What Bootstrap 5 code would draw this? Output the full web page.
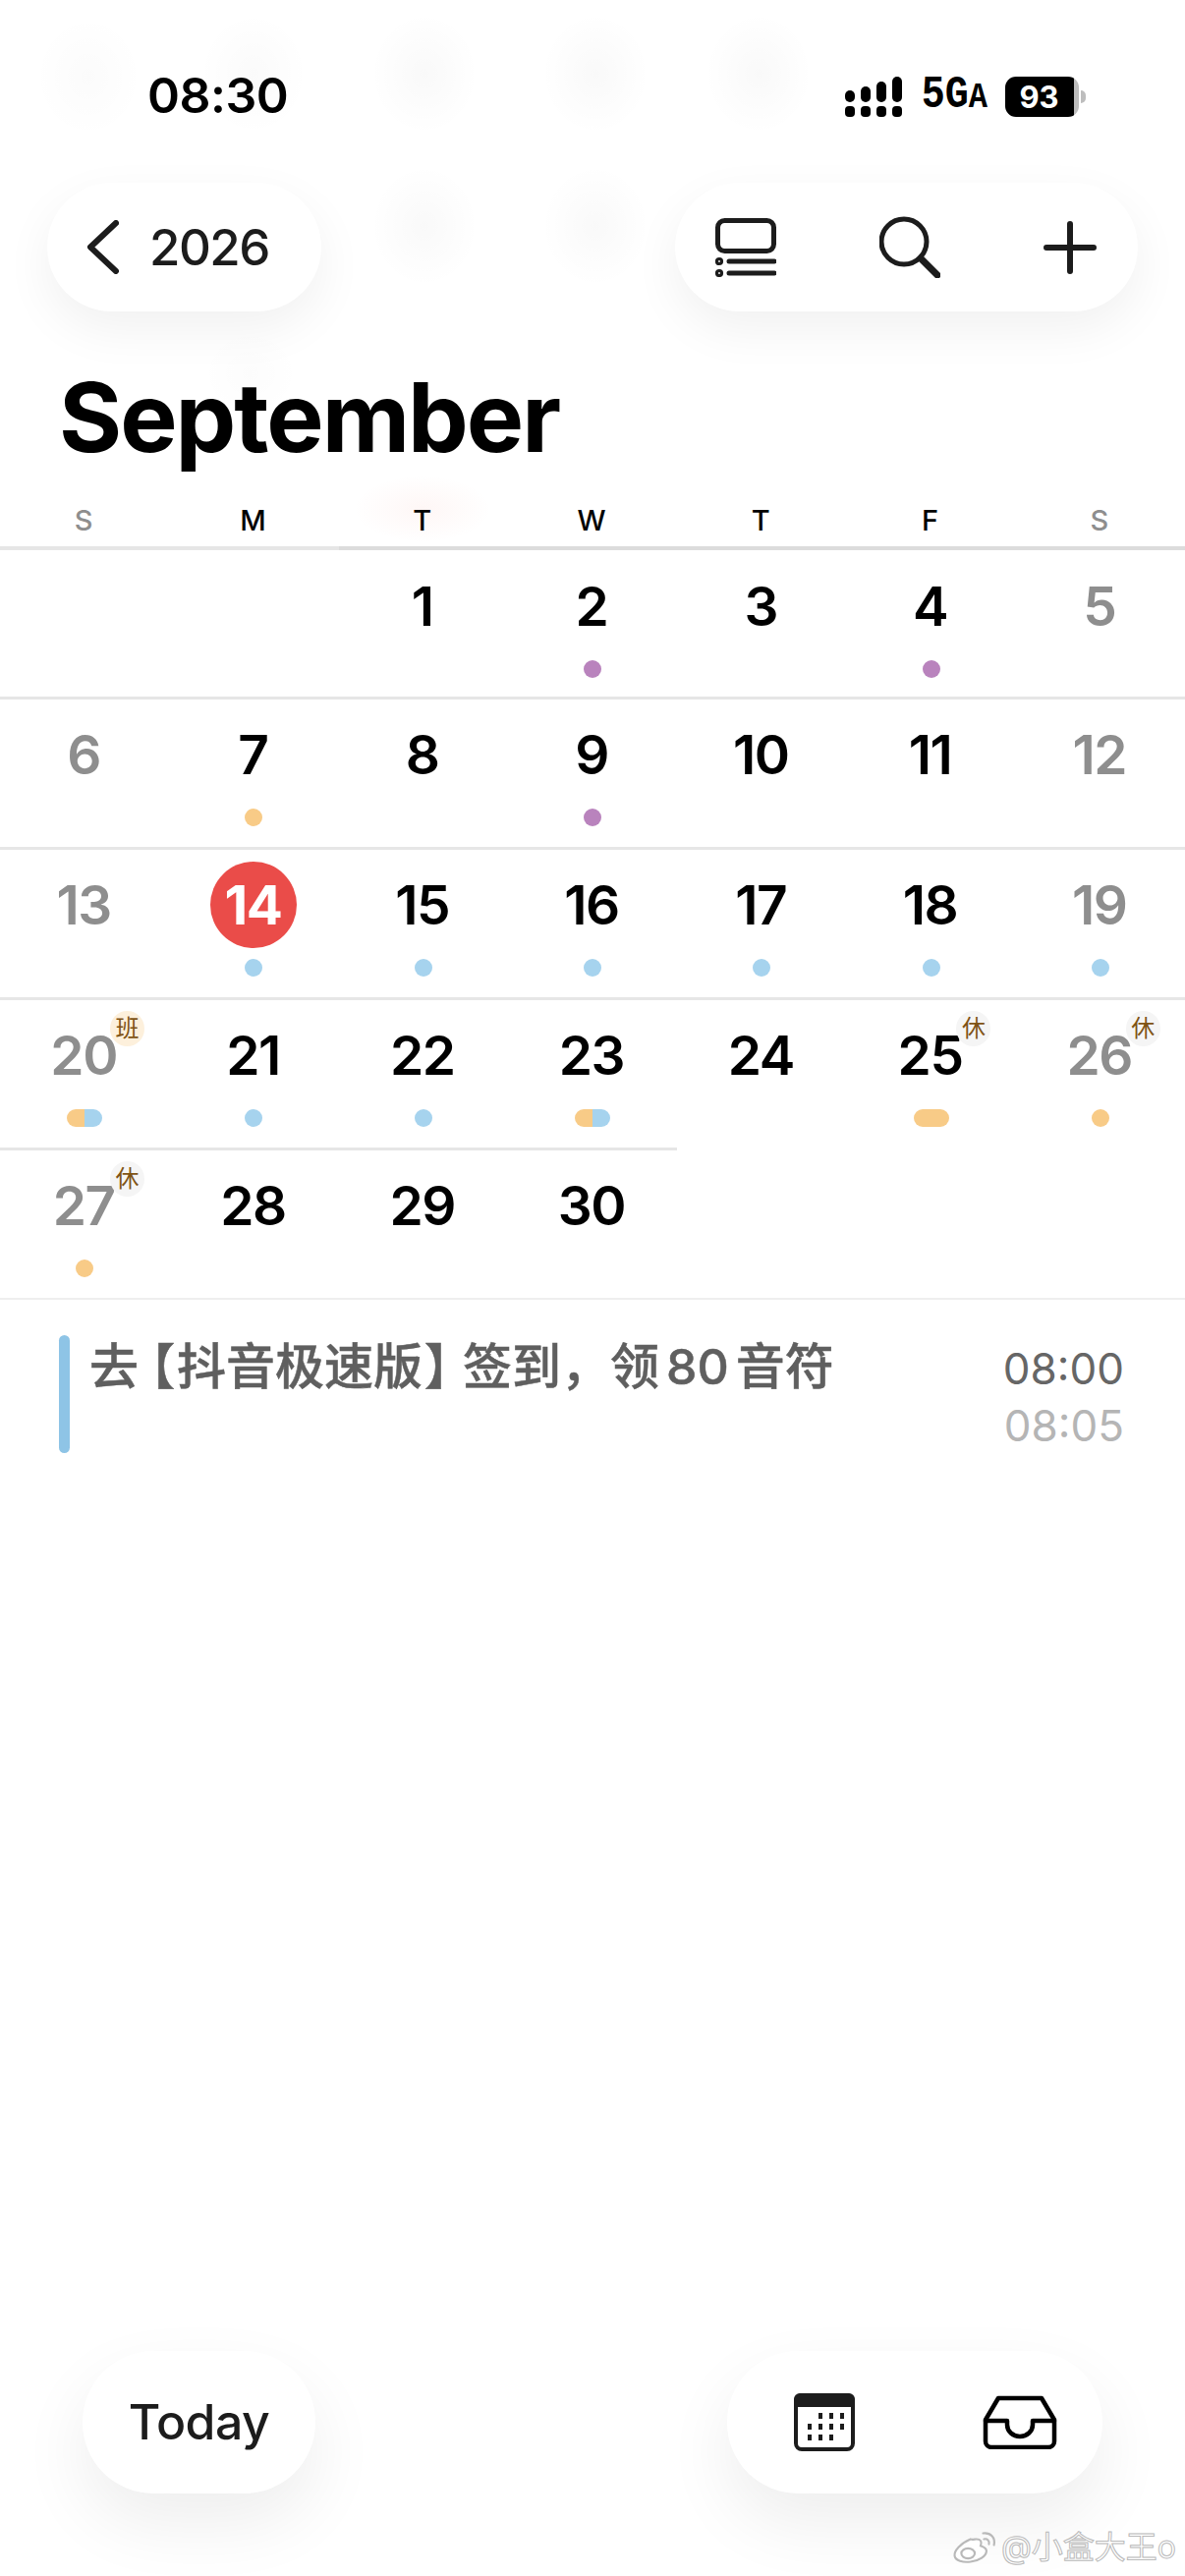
<!DOCTYPE html>
<html lang="en">
<head>
<meta charset="UTF-8">
<meta name="viewport" content="width=device-width, initial-scale=1.0">
<title>September 2026</title>
<link href="https://cdn.jsdelivr.net/npm/bootstrap@5.3.3/dist/css/bootstrap.min.css" rel="stylesheet">
<style>
body {
    margin: 0;
    font-family: "Inter", "Noto Sans CJK SC", sans-serif;
    color: #000;
    background-color: #fff;
    background-repeat: no-repeat;
    background-image:
        radial-gradient(ellipse 55px 62px at 90px 78px, rgba(0,0,0,.014), transparent),
        radial-gradient(ellipse 55px 62px at 258px 75px, rgba(0,0,0,.02), transparent),
        radial-gradient(ellipse 55px 62px at 432px 75px, rgba(0,0,0,.024), transparent),
        radial-gradient(ellipse 55px 62px at 606px 75px, rgba(0,0,0,.024), transparent),
        radial-gradient(ellipse 55px 62px at 772px 75px, rgba(0,0,0,.024), transparent),
        radial-gradient(ellipse 55px 62px at 432px 230px, rgba(0,0,0,.024), transparent),
        radial-gradient(ellipse 55px 62px at 606px 230px, rgba(0,0,0,.024), transparent),
        radial-gradient(ellipse 50px 45px at 255px 380px, rgba(0,0,0,.01), transparent),
        radial-gradient(ellipse 70px 34px at 430px 518px, rgba(240,90,70,.05), transparent);
}
.phone { height: 2622px; }
.status-row { padding: 77px 101px 0 150px; height: 186px; }
.clock { font-size: 50px; font-weight: 600; line-height: 41px; letter-spacing: -.5px; }
.net-type { font-family: "Liberation Mono", monospace; font-weight: 700; font-size: 40px; line-height: 41px; margin: 0 18px 0 20px; transform: scaleY(1.15); }
.net-type span { font-size: 32px; }
.batt-body { width: 75px; height: 41px; border-radius: 11px; color: #fff; font-size: 31px; font-weight: 700; line-height: 41px; padding-right: 6px; background: linear-gradient(to right, #000 93%, #bdbdbd 93%); }
.batt-nub { width: 5px; height: 13px; margin-left: 2px; background: #bdbdbd; border-radius: 0 5px 5px 0; }
.float-pill { background: #fff; border-radius: 66px; box-shadow: 0 18px 50px rgba(0,0,0,.06); }
.top-row { padding: 0 48px; }
.pill-year { width: 279px; height: 131px; padding-left: 40px; gap: 31px; font-size: 51px; font-weight: 500; color: #1c1c1c; line-height: 1; letter-spacing: -1.5px; }
.pill-tools { width: 471px; height: 131px; padding-left: 41px; gap: 105px; }
.month-title { font-size: 98px; font-weight: 700; letter-spacing: -2px; line-height: 110px; margin: 0; padding: 53px 0 0 60px; height: 189px; }
.week-head { height: 50px; }
.week-head .col { font-size: 29px; font-weight: 500; line-height: 48px; text-align: center; padding-right: 2px; }
.week-head .col.wk-end { color: #8e8e8e; }
.cal-cell { height: 153px; border-top: 3px solid #e6e6e6; position: relative; text-align: center; padding-top: 12px; }
.cal-cell.head-line { border-top-width: 4px; padding-top: 13px; }
.cal-cell.head-strong { border-top-color: #dcdcdc; }
.cal-cell.no-line { border-top-color: transparent; }
.day-num { display: block; width: 88px; height: 88px; margin: 0 auto; font-size: 55px; font-weight: 600; line-height: 88px; letter-spacing: -1.5px; text-indent: -2px; }
.day-off .day-num { color: #8e8e8e; }
.day-today { background: #ea4c49; color: #fff; font-weight: 700; border-radius: 50%; }
.ev-dot { display: block; height: 18px; width: 18px; border-radius: 9px; margin: 11px auto 0; }
.ev-purple { background: #b983bd; }
.ev-orange { background: #f8cb87; }
.ev-blue { background: #a6d3ee; }
.ev-wide { width: 36px; }
.ev-both { width: 36px; background: linear-gradient(to right, #f8cb87 50%, #a6d3ee 50%); }
.tag-day { position: absolute; top: 11px; left: 112px; width: 35px; height: 36px; border-radius: 50%; font-size: 24px; line-height: 36px; color: #7f5314; background: #f5f5f5; }
.tag-work { background: #fdf0dc; }
.event-row { border-top: 2px solid #eee; padding: 36px 62px 0 60px; gap: 20px; }
.event-bar { width: 11px; height: 120px; border-radius: 6px; background: #8ec4e6; }
.event-title { font-size: 50px; font-weight: 500; color: #5f5f5f; line-height: 58px; padding-top: 3px; -webkit-text-stroke: .5px #5f5f5f; }
.brk-open { font-feature-settings: "palt"; padding: 0 3px 0 11px; }
.brk-close { font-feature-settings: "palt"; padding: 0 13px 0 3px; }
.num-gap { margin: 0 7px; }
.event-times { font-size: 44px; line-height: 58px; text-align: right; color: #666; padding-top: 5px; }
.event-times div + div { color: #b5b5b5; }
.bottom-row { margin-top: auto; padding: 0 84px 84px; position: relative; }
.bottom-row .float-pill { box-shadow: 0 30px 70px rgba(0,0,0,.07); }
.pill-today { width: 237px; height: 145px; font-size: 50px; font-weight: 500; letter-spacing: -.5px; color: #1c1c1c; border-radius: 72px; }
.pill-views { width: 382px; height: 145px; padding-left: 68px; gap: 130px; border-radius: 72px; }
.mark-line { position: absolute; right: 9px; bottom: 10px; font-size: 32px; line-height: 38px; color: #fff; -webkit-text-stroke: 1px #b9b9b9; gap: 4px; }
svg { display: block; flex: none; }
</style>
</head>
<body>
<div class="phone d-flex flex-column">
    <div class="status-row d-flex justify-content-between align-items-start">
        <div class="clock">08:30</div>
        <div class="d-flex align-items-center">
            <svg width="58" height="41" viewBox="0 0 58 41" fill="#000">
                <rect x="0" y="14" width="10" height="12" rx="5"/><rect x="16" y="10" width="10" height="16" rx="5"/><rect x="32" y="5" width="10" height="21" rx="5"/><rect x="48" y="0" width="10" height="26" rx="5"/>
                <rect x="0" y="30" width="10" height="11" rx="4"/><rect x="16" y="30" width="10" height="11" rx="4"/><rect x="32" y="30" width="10" height="11" rx="4"/><rect x="48" y="30" width="10" height="11" rx="4"/>
            </svg>
            <div class="net-type">5G<span>A</span></div>
            <div class="batt-body text-center">93</div>
            <div class="batt-nub"></div>
        </div>
    </div>

    <div class="top-row d-flex justify-content-between">
        <div class="float-pill pill-year d-flex align-items-center">
            <svg width="33" height="55" viewBox="0 0 33 55" fill="none" stroke="#1c1c1c" stroke-width="6" stroke-linecap="round" stroke-linejoin="round"><path d="M30 3 4 27.5 30 52"/></svg>
            <span>2026</span>
        </div>
        <div class="float-pill pill-tools d-flex align-items-center">
            <svg width="62" height="60" viewBox="0 0 62 60" fill="none" stroke="#1c1c1c" stroke-width="5" stroke-linecap="round">
                <rect x="2.5" y="2.5" width="57" height="31" rx="7"/>
                <path d="M14 44H60M14 56H60"/>
                <circle cx="4" cy="44" r="1.6"/><circle cx="4" cy="56" r="1.6"/>
            </svg>
            <svg width="62" height="63" viewBox="0 0 62 63" fill="none" stroke="#1c1c1c" stroke-linecap="round">
                <circle cx="25" cy="26" r="23" stroke-width="5"/>
                <path d="M42 43 59 60" stroke-width="7"/>
            </svg>
            <svg width="54" height="54" viewBox="0 0 54 54" fill="none" stroke="#1c1c1c" stroke-width="6" stroke-linecap="round"><path d="M27 3V51M3 27H51"/></svg>
        </div>
    </div>

    <h1 class="month-title">September</h1>

    <div class="row g-0 week-head">
        <div class="col wk-end">S</div><div class="col">M</div><div class="col">T</div><div class="col">W</div><div class="col">T</div><div class="col">F</div><div class="col wk-end">S</div>
    </div>

    <div class="row g-0">
        <div class="col cal-cell head-line"></div>
        <div class="col cal-cell head-line"></div>
        <div class="col cal-cell head-line head-strong"><span class="day-num">1</span></div>
        <div class="col cal-cell head-line head-strong"><span class="day-num">2</span><span class="ev-dot ev-purple"></span></div>
        <div class="col cal-cell head-line head-strong"><span class="day-num">3</span></div>
        <div class="col cal-cell head-line head-strong"><span class="day-num">4</span><span class="ev-dot ev-purple"></span></div>
        <div class="col cal-cell head-line head-strong day-off"><span class="day-num">5</span></div>
    </div>
    <div class="row g-0">
        <div class="col cal-cell day-off"><span class="day-num">6</span></div>
        <div class="col cal-cell"><span class="day-num">7</span><span class="ev-dot ev-orange"></span></div>
        <div class="col cal-cell"><span class="day-num">8</span></div>
        <div class="col cal-cell"><span class="day-num">9</span><span class="ev-dot ev-purple"></span></div>
        <div class="col cal-cell"><span class="day-num">10</span></div>
        <div class="col cal-cell"><span class="day-num">11</span></div>
        <div class="col cal-cell day-off"><span class="day-num">12</span></div>
    </div>
    <div class="row g-0">
        <div class="col cal-cell day-off"><span class="day-num">13</span></div>
        <div class="col cal-cell"><span class="day-num day-today">14</span><span class="ev-dot ev-blue"></span></div>
        <div class="col cal-cell"><span class="day-num">15</span><span class="ev-dot ev-blue"></span></div>
        <div class="col cal-cell"><span class="day-num">16</span><span class="ev-dot ev-blue"></span></div>
        <div class="col cal-cell"><span class="day-num">17</span><span class="ev-dot ev-blue"></span></div>
        <div class="col cal-cell"><span class="day-num">18</span><span class="ev-dot ev-blue"></span></div>
        <div class="col cal-cell day-off"><span class="day-num">19</span><span class="ev-dot ev-blue"></span></div>
    </div>
    <div class="row g-0">
        <div class="col cal-cell day-off"><span class="day-num">20</span><span class="ev-dot ev-both"></span><span class="tag-day tag-work">班</span></div>
        <div class="col cal-cell"><span class="day-num">21</span><span class="ev-dot ev-blue"></span></div>
        <div class="col cal-cell"><span class="day-num">22</span><span class="ev-dot ev-blue"></span></div>
        <div class="col cal-cell"><span class="day-num">23</span><span class="ev-dot ev-both"></span></div>
        <div class="col cal-cell"><span class="day-num">24</span></div>
        <div class="col cal-cell"><span class="day-num">25</span><span class="ev-dot ev-orange ev-wide"></span><span class="tag-day">休</span></div>
        <div class="col cal-cell day-off"><span class="day-num">26</span><span class="ev-dot ev-orange"></span><span class="tag-day">休</span></div>
    </div>
    <div class="row g-0">
        <div class="col cal-cell day-off"><span class="day-num">27</span><span class="ev-dot ev-orange"></span><span class="tag-day">休</span></div>
        <div class="col cal-cell"><span class="day-num">28</span></div>
        <div class="col cal-cell"><span class="day-num">29</span></div>
        <div class="col cal-cell"><span class="day-num">30</span></div>
        <div class="col cal-cell no-line"></div>
        <div class="col cal-cell no-line"></div>
        <div class="col cal-cell no-line"></div>
    </div>

    <div class="event-row d-flex align-items-start">
        <div class="event-bar"></div>
        <div class="event-title flex-grow-1">去<span class="brk-open">【</span>抖音极速版<span class="brk-close">】</span>签到，领<span class="num-gap">80</span>音符</div>
        <div class="event-times">
            <div>08:00</div>
            <div>08:05</div>
        </div>
    </div>

    <div class="bottom-row d-flex justify-content-between">
        <div class="float-pill pill-today d-flex align-items-center justify-content-center">Today</div>
        <div class="float-pill pill-views d-flex align-items-center">
            <svg width="62" height="59" viewBox="0 0 62 59" fill="none">
                <rect x="2" y="2" width="58" height="55" rx="6" stroke="#1c1c1c" stroke-width="4"/>
                <path d="M6 0H56a6 6 0 0 1 6 6V14H0V6a6 6 0 0 1 6-6Z" fill="#1c1c1c"/>
                <g fill="#1c1c1c">
                    <rect x="25" y="20" width="4" height="6"/><rect x="36" y="20" width="4" height="6"/><rect x="47" y="20" width="4" height="6"/>
                    <rect x="14" y="31" width="4" height="6"/><rect x="25" y="31" width="4" height="6"/><rect x="36" y="31" width="4" height="6"/><rect x="47" y="31" width="4" height="6"/>
                    <rect x="14" y="42" width="4" height="6"/><rect x="25" y="42" width="4" height="6"/><rect x="36" y="42" width="4" height="6"/>
                </g>
            </svg>
            <svg width="76" height="55" viewBox="0 0 76 55" fill="none" stroke="#000" stroke-width="4.5" stroke-linejoin="round" stroke-linecap="round">
                <path d="M3 25 16 3H60L73 25V47a6 6 0 0 1-6 6H9a6 6 0 0 1-6-6Z"/>
                <path d="M3 26H25V30a13 12 0 0 0 26 0V26H73"/>
            </svg>
        </div>
        <div class="mark-line d-flex align-items-center">
            <svg width="46" height="38" viewBox="0 0 54 38" fill="#fff" stroke="#b9b9b9" stroke-width="2.5" stroke-linecap="round">
                <path d="M22 9C10 14 2 23 3 29c1 6 10 8 19 7 10-1 19-7 19-13 0-4-5-5-7-6 2-5 0-8-5-8-2 0-5 1-7 0Z"/>
                <ellipse cx="19" cy="26" rx="8" ry="6"/>
                <path d="M38 9c4-1 7 2 6 6M37 2c9-1 15 5 13 14" fill="none"/>
            </svg>
            <span>@小盒大王o</span>
        </div>
    </div>
</div>
<script src="https://cdn.jsdelivr.net/npm/bootstrap@5.3.3/dist/js/bootstrap.bundle.min.js"></script>
</body>
</html>
